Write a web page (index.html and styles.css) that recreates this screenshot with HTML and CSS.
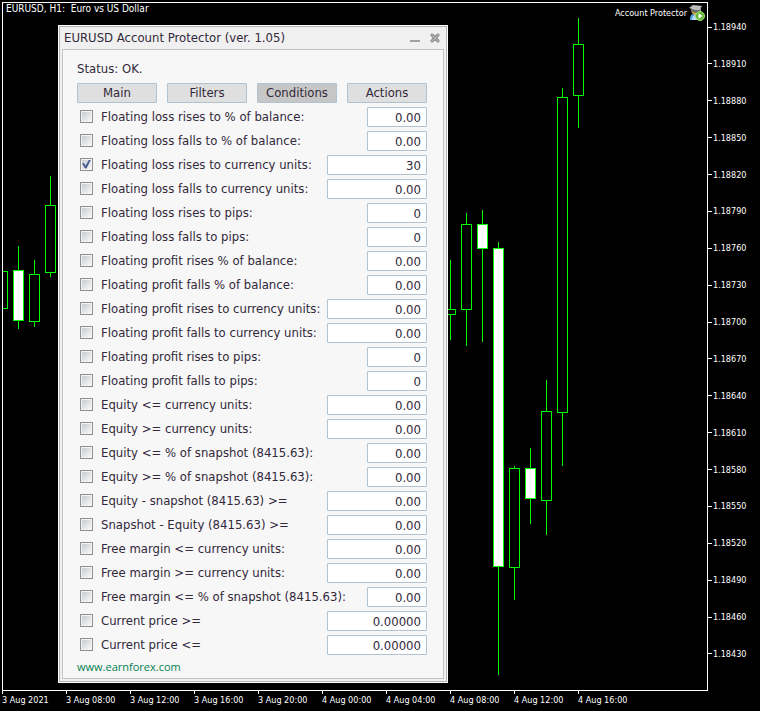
FILE: index.html
```
<!DOCTYPE html>
<html lang="en">
<head>
<meta charset="utf-8">
<title>EURUSD, H1 - Account Protector</title>
<link rel="stylesheet" href="styles.css">
</head>
<body>
<main class="terminal">
  <section class="chart">
    <svg class="candles" aria-hidden="true">
      <g class="series" transform="translate(-3 -3)">
        <path d="M18.500 246V329M34.500 260V327M50.500 176V277M450.500 260V340M466.500 213V346M482.500 210V342M498.500 242V675M514.500 466V600M530.500 448V524M546.500 380V535M562.500 88V466M578.500 18V128"/>
        <rect class="bull" x="-2.500" y="271.500" width="10" height="37"/>
        <rect class="bear" x="13.500" y="270.500" width="10" height="50"/>
        <rect class="bull" x="29.500" y="274.500" width="10" height="47"/>
        <rect class="bull" x="45.500" y="205.500" width="10" height="67"/>
        <rect class="bull" x="445.500" y="309.500" width="10" height="5"/>
        <rect class="bull" x="461.500" y="224.500" width="10" height="85"/>
        <rect class="bear" x="477.500" y="224.500" width="10" height="24"/>
        <rect class="bear" x="493.500" y="248.500" width="10" height="318"/>
        <rect class="bull" x="509.500" y="468.500" width="10" height="99"/>
        <rect class="bear" x="525.500" y="468.500" width="10" height="30"/>
        <rect class="bull" x="541.500" y="411.500" width="10" height="89"/>
        <rect class="bull" x="557.500" y="97.500" width="10" height="315"/>
        <rect class="bull" x="573.500" y="44.500" width="10" height="51"/>
      </g>
    </svg>
    <header class="chart-head">
      <h1 class="symbol">EURUSD, H1:&nbsp; Euro vs US Dollar</h1>
      <div class="expert">
        <span>Account Protector</span>
        <svg class="expert-icon" width="16" height="16" viewBox="0 0 16 16" aria-hidden="true">
          <path fill="#4f9fe0" d="M1 15c0-4 1-6 4-6h4l2 2v4z"/>
          <path fill="#b9dcf6" d="M3 15c0-3 1-4 3-5l3 5z"/>
          <path fill="#e0b23c" d="M2 5h8v3L7 11 3 8z"/>
          <path fill="#6b6b6b" d="M2 4h9v3l-4 1-4-1z"/>
          <path fill="#bdbdbd" d="M0 3l4-3 9 1-2 4-5 0z"/>
          <path fill="none" stroke="#8a8a8a" d="M11.500 2v4"/>
          <circle cx="11" cy="11" r="4.500" fill="#62b82e" stroke="#a3dc80"/>
          <path fill="#fff" d="M9.500 8l4 3-4 3z"/>
        </svg>
      </div>
    </header>
  </section>

  <ol class="prices">
    <li>1.18940</li><li>1.18910</li><li>1.18880</li><li>1.18850</li><li>1.18820</li><li>1.18790</li>
    <li>1.18760</li><li>1.18730</li><li>1.18700</li><li>1.18670</li><li>1.18640</li><li>1.18610</li>
    <li>1.18580</li><li>1.18550</li><li>1.18520</li><li>1.18490</li><li>1.18460</li><li>1.18430</li>
  </ol>

  <ol class="times">
    <li>3 Aug 2021</li><li>3 Aug 08:00</li><li>3 Aug 12:00</li><li>3 Aug 16:00</li><li>3 Aug 20:00</li>
    <li>4 Aug 00:00</li><li>4 Aug 04:00</li><li>4 Aug 08:00</li><li>4 Aug 12:00</li><li>4 Aug 16:00</li>
  </ol>
</main>

<section class="panel" aria-labelledby="panel-title">
  <header class="panel-head">
    <h2 id="panel-title">EURUSD Account Protector (ver. 1.05)</h2>
    <button class="tool" type="button" aria-label="Minimize"><svg width="10" height="10" viewBox="0 0 10 10"><path fill="#a0a0a0" d="M0 7h10v2H0z"/></svg></button>
    <button class="tool" type="button" aria-label="Close"><svg width="10" height="10" viewBox="0 0 10 10"><path fill="#999" stroke="#999" stroke-width="1" d="M1 1h2l2 2 2-2h2v2L7 5l2 2v2H7L5 7 3 9H1V7l2-2-2-2z"/><path fill="none" stroke="#b4b4b4" d="M2 2l6 6M8 2L2 8"/></svg></button>
  </header>
  <form class="panel-body">
    <p class="status">Status: OK.</p>
    <nav class="tabs">
      <button type="button">Main</button>
      <button type="button">Filters</button>
      <button type="button" class="active">Conditions</button>
      <button type="button">Actions</button>
    </nav>
    <div class="rows">
      <div class="row"><input type="checkbox" id="c1"><label for="c1">Floating loss rises to % of balance:</label><input class="value" type="text" value="0.00" aria-label="Floating loss rises to % of balance"></div>
      <div class="row"><input type="checkbox" id="c2"><label for="c2">Floating loss falls to % of balance:</label><input class="value" type="text" value="0.00" aria-label="Floating loss falls to % of balance"></div>
      <div class="row"><input type="checkbox" id="c3" checked><label for="c3">Floating loss rises to currency units:</label><input class="value wide" type="text" value="30" aria-label="Floating loss rises to currency units"></div>
      <div class="row"><input type="checkbox" id="c4"><label for="c4">Floating loss falls to currency units:</label><input class="value wide" type="text" value="0.00" aria-label="Floating loss falls to currency units"></div>
      <div class="row"><input type="checkbox" id="c5"><label for="c5">Floating loss rises to pips:</label><input class="value" type="text" value="0" aria-label="Floating loss rises to pips"></div>
      <div class="row"><input type="checkbox" id="c6"><label for="c6">Floating loss falls to pips:</label><input class="value" type="text" value="0" aria-label="Floating loss falls to pips"></div>
      <div class="row"><input type="checkbox" id="c7"><label for="c7">Floating profit rises % of balance:</label><input class="value" type="text" value="0.00" aria-label="Floating profit rises % of balance"></div>
      <div class="row"><input type="checkbox" id="c8"><label for="c8">Floating profit falls % of balance:</label><input class="value" type="text" value="0.00" aria-label="Floating profit falls % of balance"></div>
      <div class="row"><input type="checkbox" id="c9"><label for="c9">Floating profit rises to currency units:</label><input class="value wide" type="text" value="0.00" aria-label="Floating profit rises to currency units"></div>
      <div class="row"><input type="checkbox" id="c10"><label for="c10">Floating profit falls to currency units:</label><input class="value wide" type="text" value="0.00" aria-label="Floating profit falls to currency units"></div>
      <div class="row"><input type="checkbox" id="c11"><label for="c11">Floating profit rises to pips:</label><input class="value" type="text" value="0" aria-label="Floating profit rises to pips"></div>
      <div class="row"><input type="checkbox" id="c12"><label for="c12">Floating profit falls to pips:</label><input class="value" type="text" value="0" aria-label="Floating profit falls to pips"></div>
      <div class="row"><input type="checkbox" id="c13"><label for="c13">Equity &lt;= currency units:</label><input class="value wide" type="text" value="0.00" aria-label="Equity at most, currency units"></div>
      <div class="row"><input type="checkbox" id="c14"><label for="c14">Equity &gt;= currency units:</label><input class="value wide" type="text" value="0.00" aria-label="Equity at least, currency units"></div>
      <div class="row"><input type="checkbox" id="c15"><label for="c15">Equity &lt;= % of snapshot (8415.63):</label><input class="value" type="text" value="0.00" aria-label="Equity at most, % of snapshot"></div>
      <div class="row"><input type="checkbox" id="c16"><label for="c16">Equity &gt;= % of snapshot (8415.63):</label><input class="value" type="text" value="0.00" aria-label="Equity at least, % of snapshot"></div>
      <div class="row"><input type="checkbox" id="c17"><label for="c17">Equity - snapshot (8415.63) &gt;=</label><input class="value wide" type="text" value="0.00" aria-label="Equity minus snapshot"></div>
      <div class="row"><input type="checkbox" id="c18"><label for="c18">Snapshot - Equity (8415.63) &gt;=</label><input class="value wide" type="text" value="0.00" aria-label="Snapshot minus equity"></div>
      <div class="row"><input type="checkbox" id="c19"><label for="c19">Free margin &lt;= currency units:</label><input class="value wide" type="text" value="0.00" aria-label="Free margin at most, currency units"></div>
      <div class="row"><input type="checkbox" id="c20"><label for="c20">Free margin &gt;= currency units:</label><input class="value wide" type="text" value="0.00" aria-label="Free margin at least, currency units"></div>
      <div class="row"><input type="checkbox" id="c21"><label for="c21">Free margin &lt;= % of snapshot (8415.63):</label><input class="value" type="text" value="0.00" aria-label="Free margin at most, % of snapshot"></div>
      <div class="row"><input type="checkbox" id="c22"><label for="c22">Current price &gt;=</label><input class="value wide" type="text" value="0.00000" aria-label="Current price at least"></div>
      <div class="row"><input type="checkbox" id="c23"><label for="c23">Current price &lt;=</label><input class="value wide" type="text" value="0.00000" aria-label="Current price at most"></div>
    </div>
    <a class="site" href="#">www.earnforex.com</a>
  </form>
</section>
</body>
</html>
```
FILE: styles.css
```
* {
  box-sizing: border-box;
}

body {
  margin: 0;
  background: #000;
  color: #fff;
  font-family: "DejaVu Sans Condensed", "DejaVu Sans", sans-serif;
}

h1,
h2,
p,
ol {
  margin: 0;
  padding: 0;
  font-weight: normal;
  list-style: none;
}

/* Chart window */

.terminal {
  display: grid;
  grid-template-columns: minmax(0, 1fr) 52px;
  grid-template-rows: minmax(0, 1fr) 20px;
  height: 100vh;
  min-height: 700px;
  padding: 2px 0 0 2px;
  font-size: 9px;
  line-height: 12px;
}

.chart {
  position: relative;
  border: 1px solid #fff;
  overflow: hidden;
}

.candles {
  position: absolute;
  top: 0;
  left: 0;
  width: 100%;
  height: 100%;
}

.series {
  stroke: #0f0;
  stroke-width: 1px;
  shape-rendering: crispEdges;
}

.bull {
  fill: #000;
}

.bear {
  fill: #fff;
}

.chart-head {
  position: relative;
  display: flex;
  justify-content: space-between;
}

.symbol {
  padding-left: 3px;
  font-size: 10px;
}

.expert {
  display: flex;
  align-items: center;
  gap: 2px;
  padding: 2px 2px 0 0;
}

.prices {
  display: flex;
  flex-direction: column;
  justify-content: space-between;
  padding: 19px 0 31px;
}

.prices li {
  display: flex;
  align-items: center;
  gap: 1px;
}

.prices li::before {
  content: "";
  width: 4px;
  height: 1px;
  background: #fff;
}

.times {
  display: flex;
  grid-column: 1 / -1;
  overflow: hidden;
}

.times li {
  flex: 0 0 64px;
  white-space: nowrap;
}

.times li::before {
  content: "";
  display: block;
  width: 1px;
  height: 3px;
  background: #fff;
}

/* Account Protector dialog, floating over the chart */

.panel {
  position: absolute;
  top: 25px;
  left: 58px;
  width: 390px;
  padding: 1px 3px 3px;
  border: 1px solid #fff;
  outline: 1px solid #b4b4b4;
  outline-offset: -2px;
  background: #f0f0f0;
  color: #33283a;
  font-size: 13px;
  line-height: 16px;
}

.panel-head {
  display: flex;
  align-items: center;
  gap: 10px;
  height: 22px;
  padding: 0 4px 0 2px;
}

.panel-head h2 {
  flex: 1;
  font-size: 13px;
}

.tool {
  display: flex;
  padding: 0;
  border: 0;
  background: none;
}

.panel-body {
  padding: 11px 16px 3px 14px;
  border: 1px solid #c3c3c3;
  background: #f7f7f7;
}

.tabs {
  display: flex;
  gap: 10px;
  margin: 6px 0 2px;
}

.tabs button {
  flex: 1;
  height: 20px;
  padding: 0;
  border: 1px solid #b2c3cf;
  border-radius: 1px;
  background: #dfdfdf;
  color: inherit;
  font: inherit;
}

.tabs .active {
  background: #c6c6c6;
}

.row {
  display: flex;
  align-items: center;
  height: 24px;
  padding-left: 3px;
}

.row label {
  flex: 1;
  padding-left: 8px;
  white-space: nowrap;
}

.row input[type="checkbox"] {
  appearance: none;
  flex: none;
  width: 13px;
  height: 13px;
  margin: 0 0 2px;
  padding: 1px;
  border: 1px solid #8e8f8f;
  background: linear-gradient(135deg, #c8cdd3, #f6f6f6) content-box, #f4f4f4;
}

.row input[type="checkbox"]::before {
  content: "";
  display: block;
  height: 9px;
}

.row input[type="checkbox"]:checked::before {
  background: #4a5f97;
  clip-path: polygon(0 45%, 22% 38%, 40% 66%, 78% 0, 100% 0, 50% 100%, 34% 100%);
}

.row .value {
  flex: none;
  width: 60px;
  height: 20px;
  padding: 0 5px;
  border: 1px solid #b2c3cf;
  border-radius: 1px;
  background: #fff;
  color: inherit;
  font: inherit;
  text-align: right;
}

.row .wide {
  width: 100px;
}

.site {
  display: block;
  width: max-content;
  margin-top: 2px;
  color: #008050;
  font-family: "Open Sans", sans-serif;
  font-size: 11px;
  text-decoration: none;
}
```
